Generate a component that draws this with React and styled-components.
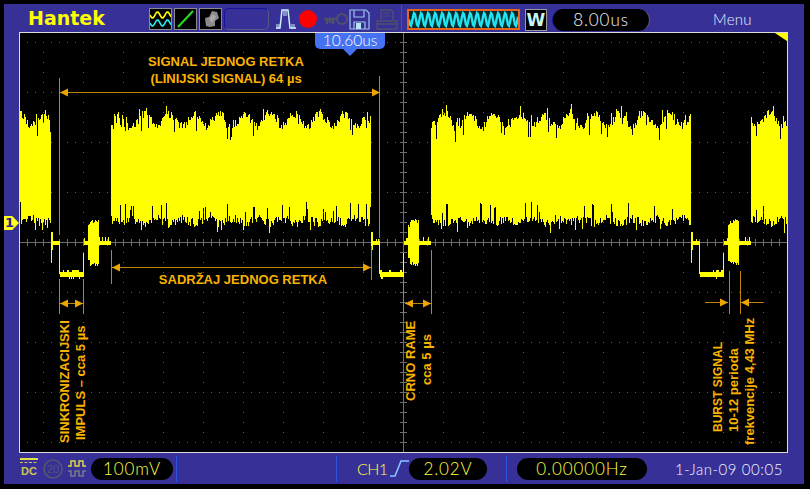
import React from "react";
import styled, { createGlobalStyle } from "styled-components";

const Global = createGlobalStyle`
  html, body { margin: 0; padding: 0; background: #000; }
  body { width: 810px; height: 489px; overflow: hidden; font-family: "Lato", "Liberation Sans", sans-serif; }
`;

const Page = styled.div`
  width: 810px;
  height: 489px;
  box-sizing: border-box;
  padding: 4px 6px 5px 4px;
  background: #000;
`;
const Panel = styled.div`
  height: 100%;
  display: flex;
  flex-direction: column;
  background: #363097;
`;
const TopBar = styled.header`
  height: 28px;
  display: flex;
  align-items: center;
  flex: none;
`;
const Logo = styled.div`
  width: 120px;
  margin-left: 24px;
  font: bold 19px "DejaVu Sans", sans-serif;
  color: #ffff00;
  line-height: 20px;
`;
const Thumb = styled.div`
  width: 23px;
  height: 22px;
  margin-left: ${(p) => p.$ml || 2}px;
  box-sizing: border-box;
  border: 1px solid #8a8a8a;
  background: #000;
  display: flex;
  flex: none;
  margin-top: 2px;
`;
const Slot = styled.div`
  width: 45px;
  height: 22px;
  margin-left: 2px;
  margin-top: 2px;
  box-sizing: border-box;
  border: 1px solid;
  border-color: #14149c #5a5a86 #5a5a86 #14149c;
  border-radius: 5px;
`;
const Glyph = styled.svg`
  display: block;
  flex: none;
  margin-left: ${(p) => p.$ml || 0}px;
  margin-top: ${(p) => p.$mt || 0}px;
`;
const Divider = styled.div`
  width: 1px;
  flex: none;
  height: 26px;
  margin-left: ${(p) => p.$ml}px;
  background: #2a55e0;
`;
const WaveBox = styled.div`
  width: 113px;
  height: 21px;
  margin-left: 5px;
  margin-top: 3px;
  box-sizing: border-box;
  border: 2px solid #e8641a;
  background: #062a30;
  flex: none;
`;
const WButton = styled.div`
  width: 22px;
  height: 22px;
  margin-left: 5px;
  margin-top: 3px;
  box-sizing: border-box;
  border: 1px solid #999;
  background: #000;
  color: #c8f4f4;
  font: bold 17px/20px "DejaVu Sans", sans-serif;
  text-align: center;
  flex: none;
`;
const Pill = styled.div`
  height: 22px;
  width: ${(p) => p.$w}px;
  margin-left: ${(p) => p.$ml}px;
  margin-top: ${(p) => p.$mt || 0}px;
  border-radius: 11px;
  background: #000;
  color: ${(p) => p.$color};
  font-size: 17px;
  font-weight: 300;
  line-height: 22px;
  letter-spacing: 0.9px;
  text-align: center;
  flex: none;
`;
const TimeBase = styled(Pill)`
  border-left: 1px solid #14149c;
  border-right: 1px solid #5a5a86;
  box-sizing: border-box;
`;
const MenuLabel = styled.div`
  margin-left: 63px;
  color: #e8f0ff;
  font-size: 15px;
  font-weight: 300;
  letter-spacing: 0.3px;
  margin-top: 2px;
`;
const ScreenRow = styled.main`
  flex: 1;
  display: flex;
  min-height: 0;
  padding: 0 16px 0 15px;
  position: relative;
`;
const Screen = styled.div`
  flex: 1;
  box-sizing: border-box;
  border: 1px solid #dcdcdc;
  background: #000;
  position: relative;
`;
const Trace = styled.svg`
  display: block;
  width: 767px;
  height: 419px;
`;
const Note = styled.text`
  font: bold ${(p) => p.$size || 13}px "Liberation Sans", sans-serif;
  fill: #fab200;
`;
const CursorTag = styled.div`
  position: absolute;
  left: 295px;
  top: 0;
  width: 70px;
  height: 16px;
  background: #4472f2;
  border-radius: 0 0 5px 5px;
  color: #fff;
  font-size: 15.5px;
  font-weight: 300;
  line-height: 15px;
  text-align: center;
  &::after {
    content: "";
    position: absolute;
    left: 28px;
    top: 16px;
    border: 7px solid transparent;
    border-bottom: 0;
    border-top-color: #4472f2;
  }
`;
const ChannelMark = styled.div`
  position: absolute;
  left: 0;
  top: 184px;
  width: 15px;
  height: 14px;
  background: #ffff20;
  clip-path: polygon(0 0, 55% 0, 100% 50%, 55% 100%, 0 100%);
  color: #222090;
  font: bold 13px/14px "DejaVu Sans", sans-serif;
  padding-left: 1px;
  box-sizing: border-box;
`;
const Corner = styled.div`
  position: absolute;
  right: 0;
  top: 0;
  width: 12px;
  height: 8px;
  background: #ffff00;
  clip-path: polygon(0 0, 100% 0, 100% 100%);
`;
const BottomBar = styled.footer`
  height: 31px;
  display: flex;
  align-items: center;
  flex: none;
`;
const ChannelLabel = styled.div`
  margin-left: 20px;
  color: #ffff40;
  font-size: 16px;
  font-weight: 300;
  letter-spacing: -0.6px;
  width: 33px;
  flex: none;
`;
const DateLabel = styled.div`
  margin-left: 28px;
  color: #f4f4ff;
  font-size: 15px;
  font-weight: 300;
  letter-spacing: 0.55px;
  white-space: nowrap;
`;

/* ---------- signal ---------- */
let seed = 12345;
const rnd = () => {
  seed = (seed * 16807) % 2147483647;
  return seed / 2147483647;
};

function band(x0, x1) {
  let d = "";
  for (let x = x0; x < x1; x++) {
    const hump = Math.sin((2 * Math.PI * (x - 113)) / 25);
    let top = 120 - 6 * hump + (rnd() - 0.5) * 8;
    const r = rnd();
    if (r < 0.1) top += 7 + rnd() * 9;
    else if (r < 0.18) top -= 4 + rnd() * 4;
    let bot = 221 + 2 * hump + (rnd() - 0.5) * 9;
    const q = rnd();
    if (q < 0.09) bot = 202 + rnd() * 11;
    else if (q < 0.15) bot = 227 + rnd() * 6;
    d += `M${x + 0.5} ${Math.round(top)}V${Math.round(bot)}`;
  }
  return d;
}

function lineBlank(s) {
  let d = "";
  const col = (x, a, b) => {
    d += `M${x + 0.5} ${a}V${b}`;
  };
  col(s, 232, 263);
  col(s + 1, 232, 250);
  for (let x = s + 2; x < s + 8; x++) col(x, 241 - (rnd() < 0.2 ? 2 : 0), 245);
  col(s + 8, 241, 274);
  for (let x = s + 9; x < s + 32; x++)
    col(x, 272 - (rnd() < 0.35 ? 2 : 0), 277 + (rnd() < 0.12 ? 2 : 0));
  col(s + 32, 253, 277);
  for (let x = s + 33; x < s + 37; x++) col(x, 241 - (rnd() < 0.3 ? 3 : 0), 245);
  for (let x = s + 37; x < s + 48; x++) {
    const edge = x < s + 39 ? 5 : 0;
    col(x, 219 + edge + Math.round(rnd() * 4), 262 + Math.round(rnd() * 4) - edge);
  }
  for (let x = s + 48; x < s + 60; x++) col(x, 241 - (rnd() < 0.25 ? 4 : 0), 245);
  return d;
}

const TRACE =
  band(20, 51) +
  lineBlank(51) +
  band(111, 371) +
  lineBlank(371) +
  band(431, 691) +
  lineBlank(691) +
  band(751, 787);

const range = (a, b, s) => {
  const out = [];
  for (let v = a; v <= b; v += s) out.push(v);
  return out;
};

const Grid = () => {
  let dots = "";
  const rows = range(42, 442, 50);
  const cols = range(43, 763, 40);
  rows.forEach((y) => {
    for (let x = 403 - 48 * 8; x < 788; x += 8) dots += `M${x} ${y}h1v1h-1z`;
  });
  cols.forEach((x) => {
    for (let y = 42; y < 452; y += 10) dots += `M${x} ${y}h1v1h-1z`;
  });
  let ticks = "";
  for (let x = 403 - 48 * 8; x < 788; x += 8) ticks += `M${x + 0.5} 239V246`;
  for (let y = 42; y < 452; y += 10) ticks += `M400 ${y + 0.5}H407`;
  return (
    <g shapeRendering="crispEdges">
      <path d={dots} fill="#5c5c5c" />
      <path d={`M20 242.5H787M403.5 33V452${ticks}`} stroke="#6e6e6e" strokeWidth="1" fill="none" />
    </g>
  );
};

const ORANGE = "#bd8608";
const HEAD = "#eda600";
const VLine = ({ x, a, b }) => <line x1={x} x2={x} y1={a} y2={b} stroke={ORANGE} strokeWidth="1" shapeRendering="crispEdges" />;
const HArrow = ({ a, b, y, left = true, right = true }) => (
  <g>
    <line x1={a} x2={b} y1={y} y2={y} stroke={ORANGE} strokeWidth="1" shapeRendering="crispEdges" />
    {left && <polygon points={`${a},${y} ${a + 8},${y - 4} ${a + 8},${y + 4}`} fill={HEAD} />}
    {right && <polygon points={`${b},${y} ${b - 8},${y - 4} ${b - 8},${y + 4}`} fill={HEAD} />}
  </g>
);
const Vert = ({ x, y, size, children }) => (
  <Note x={x} y={y} $size={size} transform={`rotate(-90 ${x} ${y})`}>
    {children}
  </Note>
);

const Annotations = () => (
  <g>
    <VLine x={59.5} a={78} b={235} />
    <VLine x={379.5} a={76} b={238} />
    <HArrow a={60} b={380} y={92.5} />
    <VLine x={111.5} a={250} b={284} />
    <VLine x={371.5} a={246} b={280} />
    <HArrow a={112} b={371} y={267.5} />
    <VLine x={59.5} a={279} b={314} />
    <VLine x={83.5} a={279} b={314} />
    <HArrow a={60} b={83} y={303.5} />
    <VLine x={403.5} a={280} b={314} />
    <VLine x={431.5} a={250} b={314} />
    <HArrow a={405} b={431} y={303.5} />
    <VLine x={729.5} a={271} b={314} />
    <VLine x={740.5} a={271} b={314} />
    <HArrow a={705} b={728} y={302.5} left={false} />
    <HArrow a={741} b={763} y={302.5} right={false} />
    <Note x={226} y={66} textAnchor="middle">SIGNAL JEDNOG RETKA</Note>
    <Note x={226} y={83} textAnchor="middle">(LINIJSKI SIGNAL) 64 µs</Note>
    <Note x={243} y={284} textAnchor="middle">SADRŽAJ JEDNOG RETKA</Note>
    <Vert x={69} y={443}>SINKRONIZACIJSKI</Vert>
    <Vert x={85} y={440}>IMPULS – cca 5 µs</Vert>
    <Vert x={415} y={401}>CRNO RAME</Vert>
    <Vert x={431} y={385}>cca 5 µs</Vert>
    <Vert x={722} y={432} size={12}>BURST SIGNAL</Vert>
    <Vert x={738} y={432}>10-12 perioda</Vert>
    <Vert x={754} y={445}>frekvencije 4,43 MHz</Vert>
  </g>
);

/* ---------- icons ---------- */
const sine = (y, amp, w, per) => {
  let d = `M0 ${y}`;
  for (let x = 1; x <= w; x++) d += `L${x} ${(y + amp * Math.sin((x / per) * 2 * Math.PI)).toFixed(1)}`;
  return d;
};
const ChannelsIcon = () => (
  <Glyph width="21" height="20">
    <path d={sine(6, 3, 21, 10)} stroke="#ffff00" strokeWidth="1.6" fill="none" />
    <path d={sine(14, 3, 21, 10)} stroke="#22e8ee" strokeWidth="1.6" fill="none" />
  </Glyph>
);
const XYIcon = () => (
  <Glyph width="21" height="20">
    <line x1="3" y1="18" x2="18" y2="2" stroke="#20e020" strokeWidth="2" />
  </Glyph>
);
const PersistIcon = () => (
  <Glyph width="21" height="20">
    <path d="M6 17L5 9L9 8L12 2L17 3L19 9L15 12L15 17L10 18Z" fill="#8a8a8a" />
    <path d="M9 10L13 5L16 8L12 14Z" fill="#a8a8a8" />
  </Glyph>
);
const PulseIcon = () => (
  <Glyph width="22" height="22" $ml={6} $mt={2} viewBox="0 0 22 22">
    <path d="M1 20H5L7 2H13L15 20H21" stroke="#cdeefa" strokeWidth="1.5" fill="none" />
    <path d="M9 2V8M11 2V8M2 16V21M4 16V21M17 16V21M19 16V21" stroke="#cdeefa" strokeWidth="1" fill="none" />
  </Glyph>
);
const RecordDot = () => (
  <Glyph width="18" height="18" $ml={2} $mt={2}>
    <circle cx="9" cy="9" r="9" fill="#ff0000" />
  </Glyph>
);
const KeyIcon = () => (
  <Glyph width="24" height="14" $ml={7} $mt={2}>
    <circle cx="18" cy="7" r="5" fill="none" stroke="#50506a" strokeWidth="2.2" />
    <path d="M0 7H13M3 7V12M6 7V11M9 7V12" stroke="#50506a" strokeWidth="2.4" fill="none" />
  </Glyph>
);
const FloppyIcon = () => (
  <Glyph width="21" height="21" $ml={1} $mt={2}>
    <path d="M1 1H17L20 4V20H1Z" fill="none" stroke="#9cc4ec" strokeWidth="1.2" />
    <path d="M5 1V8H15V1" fill="none" stroke="#9cc4ec" strokeWidth="1.2" />
    <path d="M5 20V13H16V20" fill="none" stroke="#9cc4ec" strokeWidth="1.2" />
    <rect x="7" y="14" width="5" height="6" fill="#b8e4f4" />
  </Glyph>
);
const PrinterIcon = () => (
  <Glyph width="22" height="21" $ml={6} $mt={2}>
    <path d="M5 11V1H15L17 3V11" fill="none" stroke="#50506a" strokeWidth="1.4" />
    <path d="M7 4H14M7 7H14" stroke="#50506a" strokeWidth="1.2" />
    <path d="M1 12H21V20H1ZM1 15H21" fill="none" stroke="#50506a" strokeWidth="1.4" />
  </Glyph>
);
const DenseWave = () => (
  <Glyph width="109" height="17">
    <path d={sine(8.5, 6.5, 109, 7)} stroke="#20e4f0" strokeWidth="2.4" fill="none" />
  </Glyph>
);
const CouplingIcon = () => (
  <Glyph width="18" height="22" $ml={16} viewBox="0 0 18 22">
    <rect x="0" y="0" width="18" height="2" fill="#e0e040" />
    <path d="M0 4.5H18" stroke="#c8c850" strokeDasharray="3 1.5" strokeWidth="1" />
    <text x="9" y="17" textAnchor="middle" fontFamily="Liberation Sans" fontWeight="700" fontSize="11" fill="#c8c850">DC</text>
  </Glyph>
);
const BandwidthIcon = () => (
  <Glyph width="20" height="20" $ml={5} viewBox="0 0 20 20">
    <circle cx="10" cy="10" r="9" fill="none" stroke="#55556e" strokeWidth="1.6" />
    <text x="10" y="14" textAnchor="middle" fontFamily="Liberation Sans" fontSize="11" fill="#55556e">20</text>
  </Glyph>
);
const InvertIcon = () => (
  <Glyph width="18" height="18" $ml={5} viewBox="0 0 18 18">
    <path d="M0 6H3V1H7V6H11V1H15V6H18" fill="none" stroke="#e0e040" strokeWidth="1.4" />
    <path d="M0 11H3V16H7V11H11V16H15V11H18" fill="none" stroke="#77778a" strokeWidth="1.6" />
  </Glyph>
);
const EdgeIcon = () => (
  <Glyph width="19" height="22" viewBox="0 0 19 22">
    <path d="M0 18H5L11 3H19" fill="none" stroke="#86c4ff" strokeWidth="1.6" />
  </Glyph>
);

export default function App() {
  return (
    <Page>
      <Global />
      <Panel>
        <TopBar>
          <Logo>Hantek</Logo>
          <Thumb $ml={1}><ChannelsIcon /></Thumb>
          <Thumb><XYIcon /></Thumb>
          <Thumb><PersistIcon /></Thumb>
          <Slot />
          <PulseIcon />
          <RecordDot />
          <KeyIcon />
          <FloppyIcon />
          <PrinterIcon />
          <Divider $ml={3} />
          <WaveBox><DenseWave /></WaveBox>
          <WButton>W</WButton>
          <TimeBase $w={98} $ml={5} $mt={4} $color="#f4f8ff">8.00us</TimeBase>
          <MenuLabel>Menu</MenuLabel>
        </TopBar>
        <ScreenRow>
          <ChannelMark>1</ChannelMark>
          <Screen>
            <Trace viewBox="20 33 767 419">
              <Grid />
              <path d={TRACE} stroke="#ffff00" strokeWidth="1" fill="none" shapeRendering="crispEdges" />
              <Annotations />
            </Trace>
            <CursorTag>10.60us</CursorTag>
            <Corner />
          </Screen>
        </ScreenRow>
        <BottomBar>
          <CouplingIcon />
          <BandwidthIcon />
          <InvertIcon />
          <Pill $w={82} $ml={5} $color="#ffff40">100mV</Pill>
          <Divider $ml={3} />
          <Divider $ml={159} />
          <ChannelLabel>CH1</ChannelLabel>
          <EdgeIcon />
          <Pill $w={78} $ml={0} $color="#ffff40">2.02V</Pill>
          <Divider $ml={19} />
          <Pill $w={130} $ml={10} $color="#ffff40">0.00000Hz</Pill>
          <DateLabel>1-Jan-09 00:05</DateLabel>
        </BottomBar>
      </Panel>
    </Page>
  );
}
